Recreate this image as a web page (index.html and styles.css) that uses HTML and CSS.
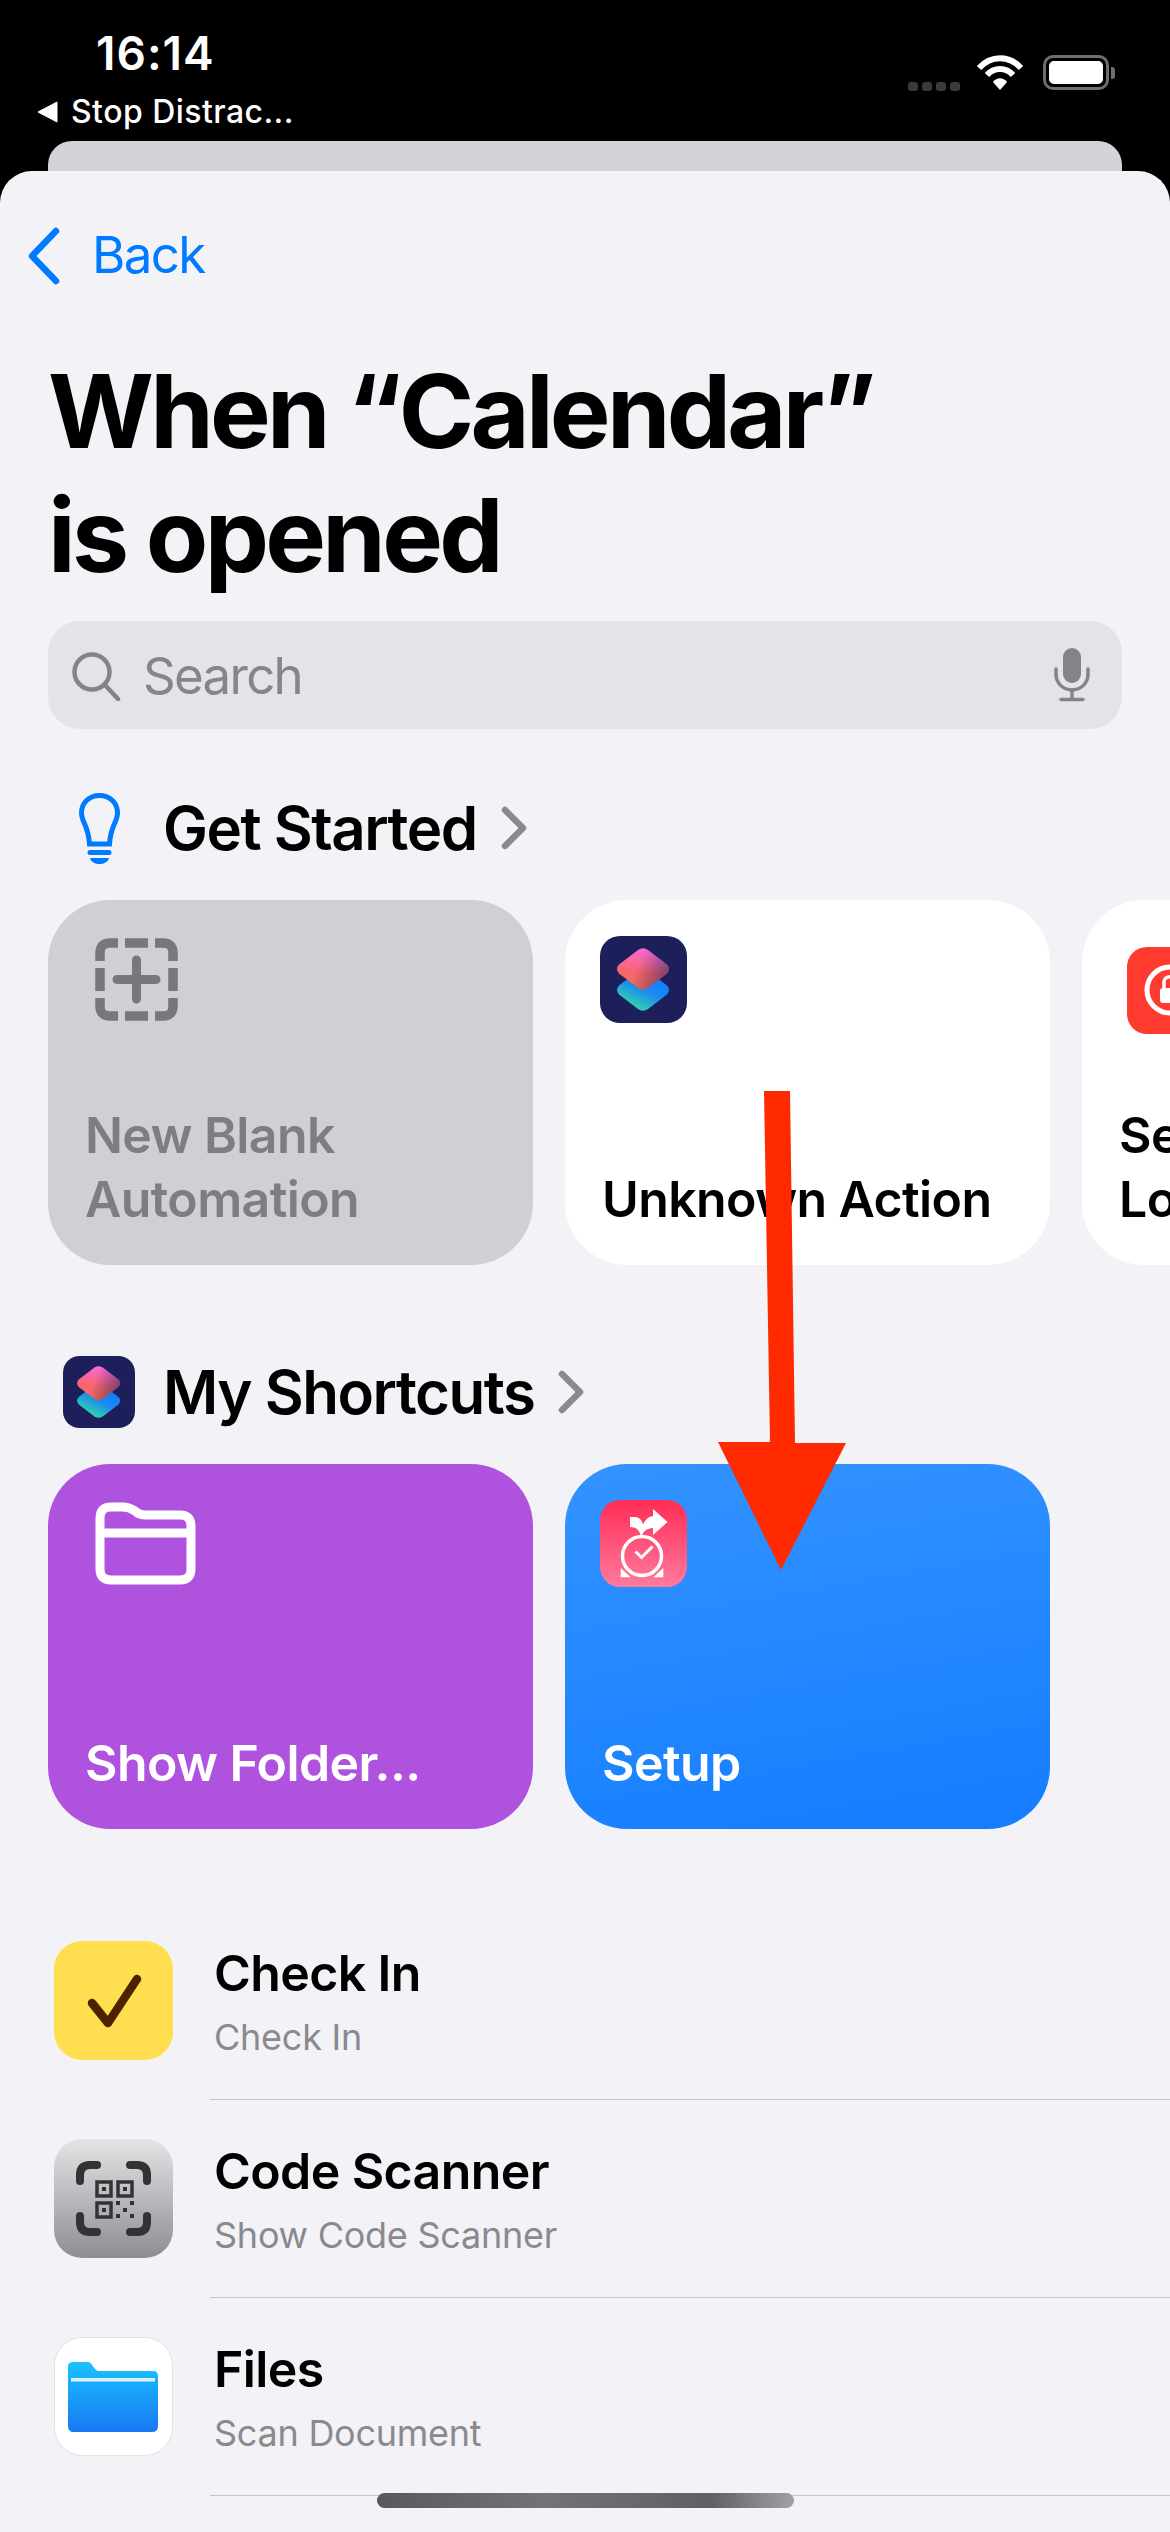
FILE: index.html
```html
<!DOCTYPE html>
<html lang="en">
<head>
    <meta charset="UTF-8">
    <meta name="viewport" content="width=device-width, initial-scale=1.0">
    <title>When Calendar is opened</title>
    <link rel="stylesheet" href="styles.css">
</head>
<body>
    <div class="phone">
        <div class="status-bar">
            <div class="status-left">
                <div class="time">16:14</div>
                <div class="return-app">
                    <svg class="return-arrow" viewBox="0 0 21 22"><path d="M20 1 V21 L1 11 Z" fill="#fff" stroke="#fff" stroke-linejoin="round"/></svg>
                    <span>Stop Distrac...</span>
                </div>
            </div>
            <div class="status-right">
                <div class="signal"><i></i><i></i><i></i><i></i></div>
                <svg class="wifi" viewBox="0 0 48 36" fill="none" stroke="#fff" stroke-width="6">
                    <path d="M3 13 C15 0 33 0 45 13"/>
                    <path d="M11 20 C18 12 30 12 37 20"/>
                    <path d="M17 27 L24 35 L31 27 C27 22 21 22 17 27 Z" fill="#fff" stroke="none"/>
                </svg>
                <div class="battery"><div class="battery-fill"></div></div>
                <div class="battery-nub"></div>
            </div>
        </div>
        <div class="peek-sheet"></div>

        <div class="sheet">
            <div class="nav">
                <svg class="back-chevron" viewBox="0 0 34 58" fill="none" stroke="#007aff" stroke-width="6.5" stroke-linecap="round" stroke-linejoin="round"><path d="M29 4 L5 29 L29 54"/></svg>
                <span class="back-label">Back</span>
            </div>

            <h1 class="title">When “Calendar”<br>is opened</h1>

            <div class="search">
                <svg class="search-icon" viewBox="0 0 49 49" fill="none" stroke="#838388" stroke-width="4.5" stroke-linecap="round"><circle cx="20" cy="20" r="17.5"/><path d="M33 33 L46 47"/></svg>
                <span class="search-text">Search</span>
                <svg class="mic-icon" viewBox="0 0 36 54" fill="none" stroke="#838388" stroke-width="3.5" stroke-linecap="round">
                    <rect x="9" y="0" width="18" height="35" rx="9" fill="#838388" stroke="none"/>
                    <path d="M2 21 V26 C2 35 9 42 18 42 C27 42 34 35 34 26 V21"/>
                    <path d="M18 42 V51 M7 51.5 H29"/>
                </svg>
            </div>

            <div class="section-head">
                <div class="section-icon">
                    <svg class="bulb" viewBox="0 0 41 71" fill="none" stroke="#007aff" stroke-width="5" stroke-linecap="round">
                        <path d="M20.5 2.5 C10 2.5 2.5 10 2.5 20 C2.5 29 9.5 33 10.5 51 H30.5 C31.5 33 38.5 29 38.5 20 C38.5 10 31 2.5 20.5 2.5 Z"/>
                        <path d="M11 59.5 H30"/>
                        <path d="M11 65 H30 C28 73 13 73 11 65 Z" fill="#007aff" stroke="none"/>
                    </svg>
                </div>
                <h2 class="section-title">Get Started</h2>
                <svg class="section-chevron" viewBox="0 0 26 44" fill="none" stroke="#8a8a8e" stroke-width="6.5" stroke-linecap="round" stroke-linejoin="round"><path d="M4 4 L22 22 L4 40"/></svg>
            </div>

            <div class="cards">
                <div class="card card-blank">
                    <svg class="plus-icon" viewBox="0 0 83 83" fill="none" stroke="#77777c" stroke-width="9.5">
                        <path d="M5 23 V15 Q5 5 15 5 H23 M30 5 H53 M60 5 H68 Q78 5 78 15 V23 M78 30 V53 M78 60 V68 Q78 78 68 78 H60 M53 78 H30 M23 78 H15 Q5 78 5 68 V60 M5 53 V30"/>
                        <path d="M22 41.5 H61 M41.5 22 V61" stroke-linecap="round" stroke-width="9"/>
                    </svg>
                    <div class="card-title">New Blank<br>Automation</div>
                </div>
                <div class="card card-white">
                    <svg class="app-icon" viewBox="0 0 87 87">
                        <defs>
                            <linearGradient id="sc-bottom" x1="0.35" y1="1" x2="0.8" y2="0.3"><stop offset="0" stop-color="#35dca3"/><stop offset="0.6" stop-color="#1a8cf0"/><stop offset="1" stop-color="#0f7fff"/></linearGradient>
                            <linearGradient id="sc-top" x1="0.5" y1="0" x2="0.35" y2="0.9"><stop offset="0" stop-color="#fb68dc"/><stop offset="0.65" stop-color="#f8666a"/><stop offset="1" stop-color="#f86c5c"/></linearGradient>
                            <linearGradient id="sc-fade" x1="0.4" y1="0.4" x2="1" y2="0.6"><stop offset="0" stop-color="#1d1f5a" stop-opacity="0"/><stop offset="1" stop-color="#1d1f5a" stop-opacity="0.55"/></linearGradient>
                            <g id="sc-glyph">
                                <rect width="87" height="87" rx="20" fill="#1d1f5a"/>
                                <path d="M38 35 Q43 31.5 48 35 L67 49.5 Q71 54 67 58.5 L48 73 Q43 76.5 38 73 L19 58.5 Q15 54 19 49.5 Z" fill="url(#sc-bottom)"/>
                                <path d="M38 14 Q43 10.5 48 14 L67 28.5 Q71 33 67 37.5 L48 52 Q43 55.5 38 52 L19 37.5 Q15 33 19 28.5 Z" fill="url(#sc-top)"/>
                                <path d="M38 14 Q43 10.5 48 14 L67 28.5 Q71 33 67 37.5 L48 52 Q43 55.5 38 52 L19 37.5 Q15 33 19 28.5 Z" fill="url(#sc-fade)"/>
                            </g>
                        </defs>
                        <use href="#sc-glyph"/>
                    </svg>
                    <div class="card-title">Unknown Action</div>
                </div>
                <div class="card card-white card-lock">
                    <svg class="app-icon" viewBox="0 0 87 87">
                        <rect width="87" height="87" rx="20" fill="#ff3b30"/>
                        <circle cx="43" cy="43" r="23" fill="none" stroke="#fff" stroke-width="5"/>
                        <rect x="33" y="41" width="20" height="15" rx="3" fill="#fff"/>
                        <path d="M37 41 V35 C37 28 49 28 49 35 V41" fill="none" stroke="#fff" stroke-width="3.5"/>
                    </svg>
                    <div class="card-title">Se<br>Lo</div>
                </div>
            </div>

            <div class="section-head">
                <div class="section-icon">
                    <svg class="section-app" viewBox="0 0 87 87"><use href="#sc-glyph"/></svg>
                </div>
                <h2 class="section-title">My Shortcuts</h2>
                <svg class="section-chevron" viewBox="0 0 26 44" fill="none" stroke="#8a8a8e" stroke-width="6.5" stroke-linecap="round" stroke-linejoin="round"><path d="M4 4 L22 22 L4 40"/></svg>
            </div>

            <div class="cards">
                <div class="card card-purple">
                    <svg class="folder-icon" viewBox="0 0 101 83" fill="none" stroke="#fff" stroke-width="9">
                        <path d="M5 16 Q5 5 16 5 H28 C34 5 37 7 40 9 C43 12 46 13 51 13 H85 Q96 13 96 24 V67 Q96 78 85 78 H16 Q5 78 5 67 Z"/>
                        <path d="M5 31 H96"/>
                    </svg>
                    <div class="card-title">Show Folder...</div>
                </div>
                <div class="card card-blue">
                    <svg class="app-icon" viewBox="0 0 87 87">
                        <defs>
                            <linearGradient id="setup-bg" x1="0" y1="0" x2="0" y2="1"><stop offset="0" stop-color="#ff2d55"/><stop offset="1" stop-color="#ff7a9f"/></linearGradient>
                        </defs>
                        <rect width="87" height="87" rx="20" fill="url(#setup-bg)"/>
                        <path d="M53 9 L67.5 22 L53 35 V28 C47 28 43 32 41 36 C41 26 45 17 53 16 Z" fill="#fff"/>
                        <path d="M30 17 H35 C41 17 44 24 44 30 C43 33 42 35 41 37 C40 31 37 27 30 27 Z" fill="#fff"/>
                        <circle cx="42" cy="56" r="19.5" fill="none" stroke="#fff" stroke-width="3.5"/>
                        <path d="M35.5 51.5 L41.5 57.5 L52.5 46.5" fill="none" stroke="#fff" stroke-width="3"/>
                        <path d="M20.7 68 V77.3 H30.7 Z M63.3 68 V77.3 H53.3 Z" fill="#fff"/>
                    </svg>
                    <div class="card-title">Setup</div>
                </div>
            </div>

            <div class="action-list">
                <div class="action-row">
                    <svg class="row-icon" viewBox="0 0 119 119">
                        <rect width="119" height="119" rx="28" fill="#ffdf4f"/>
                        <path d="M38 62 L54 82 L83 38" fill="none" stroke="#4d2200" stroke-width="8.5" stroke-linecap="round" stroke-linejoin="round"/>
                    </svg>
                    <div class="row-text">
                        <div class="row-title">Check In</div>
                        <div class="row-sub">Check In</div>
                    </div>
                </div>
                <div class="action-row">
                    <svg class="row-icon" viewBox="0 0 119 119">
                        <defs>
                            <linearGradient id="scan-bg" x1="0" y1="0" x2="0" y2="1"><stop offset="0" stop-color="#e4e4e7"/><stop offset="1" stop-color="#8e8e92"/></linearGradient>
                        </defs>
                        <rect width="119" height="119" rx="28" fill="url(#scan-bg)"/>
                        <path d="M26 42 V36 Q26 26 36 26 H43 M76 26 H83 Q93 26 93 36 V42 M93 77 V83 Q93 93 83 93 H76 M43 93 H36 Q26 93 26 83 V77" fill="none" stroke="#333336" stroke-width="8" stroke-linecap="round"/>
                        <path d="M43 43 H57 V57 H43 Z M64 43 H78 V57 H64 Z M43 64 H57 V78 H43 Z" fill="none" stroke="#333336" stroke-width="3.5"/>
                        <path d="M48 48 H52 V52 H48 Z M69 48 H73 V52 H69 Z M48 69 H52 V73 H48 Z M62 62 H66 V66 H62 Z M76 62 H80 V66 H76 Z M69 69 H73 V73 H69 Z M62 75 H66 V79 H62 Z M76 75 H80 V79 H76 Z" fill="#333336"/>
                    </svg>
                    <div class="row-text">
                        <div class="row-title">Code Scanner</div>
                        <div class="row-sub">Show Code Scanner</div>
                    </div>
                </div>
                <div class="action-row">
                    <svg class="row-icon" viewBox="0 0 119 119">
                        <defs>
                            <linearGradient id="files-bg" x1="0" y1="0" x2="0" y2="1"><stop offset="0" stop-color="#19c3ff"/><stop offset="1" stop-color="#1a78f2"/></linearGradient>
                        </defs>
                        <rect x="0.5" y="0.5" width="118" height="118" rx="28" fill="#fff" stroke="#e2e2e6"/>
                        <path d="M14 30 Q14 25 19 25 H34 C38 25 40 33 44 34 H99 Q104 34 104 39 V89 Q104 95 98 95 H20 Q14 95 14 89 Z" fill="url(#files-bg)"/>
                        <rect x="17" y="41" width="84" height="3.5" fill="#dff4ff"/>
                    </svg>
                    <div class="row-text">
                        <div class="row-title">Files</div>
                        <div class="row-sub">Scan Document</div>
                    </div>
                </div>
            </div>
        </div>

        <svg class="red-arrow" viewBox="0 0 1170 2532"><path d="M764 1091 H790 L795 1443 H846 L781 1570 L718 1442 H770 Z" fill="#ff2a00"/></svg>
        <div class="home-bar"></div>
    </div>
</body>
</html>
```

FILE: styles.css
```css
body {
    margin: 0;
    background: #000;
    font-family: 'Inter', 'Liberation Sans', sans-serif;
    color: #000;
}
.phone {
    position: relative;
    width: 1170px;
    height: 2532px;
    overflow: hidden;
    background: #000;
    display: flex;
    flex-direction: column;
}

/* status bar */
.status-bar {
    height: 141px;
    flex: none;
    display: flex;
    justify-content: space-between;
    color: #fff;
}
.status-left {
    padding: 26px 0 0 37px;
}
.time {
    margin-left: 59px;
    font-size: 46px;
    line-height: 54px;
    font-weight: 600;
    letter-spacing: 1px;
}
.return-app {
    display: flex;
    align-items: center;
    gap: 13px;
    margin-top: 12px;
    font-size: 32px;
    line-height: 40px;
    font-weight: 500;
    letter-spacing: 0.45px;
}
.return-arrow {
    width: 21px;
    height: 22px;
}
.status-right {
    display: flex;
    align-items: flex-start;
    padding: 55px 55px 0 0;
}
.signal {
    display: flex;
    gap: 4px;
    margin: 27px 16px 0 0;
}
.signal i {
    width: 10px;
    height: 9px;
    border-radius: 3px;
    background: #3a3a3c;
}
.wifi {
    width: 48px;
    height: 36px;
    margin-right: 19px;
}
.battery {
    width: 66px;
    height: 35px;
    box-sizing: border-box;
    border: 3px solid #6e6e70;
    border-radius: 10px;
    padding: 3px;
}
.battery-fill {
    height: 100%;
    background: #fff;
    border-radius: 5px;
}
.battery-nub {
    width: 4px;
    height: 12px;
    margin: 12px 0 0 2px;
    background: #6e6e70;
    border-radius: 0 3px 3px 0;
}
.peek-sheet {
    flex: none;
    height: 30px;
    margin: 0 48px;
    background: #d4d3d8;
    border-radius: 24px 24px 0 0;
}

/* main sheet */
.sheet {
    flex: 1;
    background: #f2f2f7;
    border-radius: 32px 32px 0 0;
    overflow: hidden;
}
.nav {
    display: flex;
    align-items: center;
    height: 84px;
    margin-top: 43px;
    padding-left: 27px;
    color: #007aff;
}
.back-chevron {
    width: 34px;
    height: 58px;
    margin-right: 31px;
}
.back-label {
    font-size: 51px;
    letter-spacing: -1.6px;
    margin-top: -3px;
}
.title {
    margin: 51px 0 0 48px;
    font-size: 102px;
    line-height: 124px;
    font-weight: 700;
    letter-spacing: -3.7px;
}
.search {
    display: flex;
    align-items: center;
    height: 108px;
    margin: 24px 48px 0;
    padding: 0 32px 0 24px;
    background: #e3e3e8;
    border-radius: 32px;
}
.search-icon {
    width: 49px;
    height: 49px;
    margin: 2px 22px 0 0;
}
.search-text {
    flex: 1;
    font-size: 51px;
    letter-spacing: -1.7px;
    color: #85858a;
}
.mic-icon {
    width: 36px;
    height: 54px;
}
.section-head {
    display: flex;
    align-items: center;
    height: 72px;
    margin: 63px 0 36px 48px;
}
.section-head + .cards + .section-head {
    margin-top: 91px;
}
.section-icon {
    width: 102px;
    display: flex;
    justify-content: center;
    margin-right: 13px;
}
.bulb {
    width: 41px;
    height: 71px;
}
.section-app {
    width: 72px;
    height: 72px;
}
.section-title {
    margin: 0 24px 0 0;
    font-size: 60px;
    line-height: 72px;
    font-weight: 600;
    letter-spacing: -1.5px;
}
.section-chevron {
    width: 26px;
    height: 44px;
}

/* cards */
.cards {
    display: flex;
    gap: 32px;
    padding-left: 48px;
}
.card {
    flex: none;
    box-sizing: border-box;
    width: 485px;
    height: 365px;
    padding: 36px 37px 34px;
    border-radius: 62px;
    display: flex;
    flex-direction: column;
    justify-content: space-between;
}
.card-title {
    font-size: 50px;
    line-height: 64px;
    font-weight: 600;
    letter-spacing: -0.6px;
    white-space: nowrap;
}
.card-blank {
    background: #d0cfd4;
    color: #7d7d82;
}
.card-white {
    background: #fff;
}
.card-purple {
    background: #af52de;
    color: #fff;
}
.card-blue {
    background: linear-gradient(170deg, #3393ff, #147dff);
    color: #fff;
}
.app-icon {
    width: 87px;
    height: 87px;
    margin-left: -2px;
}
.card-lock .app-icon {
    margin: 11px 0 0 8px;
}
.plus-icon {
    width: 83px;
    height: 83px;
    margin: 2px 0 0 10px;
}
.folder-icon {
    width: 101px;
    height: 83px;
    margin: 2px 0 0 10px;
}

/* list of actions */
.action-list {
    margin: 73px 0 0;
}
.action-row {
    display: flex;
    align-items: flex-start;
    padding: 39px 0;
    margin-left: 54px;
    position: relative;
    gap: 41px;
}
.action-row::after {
    content: "";
    position: absolute;
    left: 156px;
    right: 0;
    bottom: -1px;
    height: 1.5px;
    background: #c6c6c8;
}
.action-row + .action-row {
    margin-top: 1px;
}
.row-icon {
    width: 119px;
    height: 119px;
    flex: none;
}
.row-text {
    height: 119px;
}
.row-title {
    font-size: 50px;
    line-height: 64px;
    font-weight: 600;
    letter-spacing: -0.6px;
}
.row-sub {
    margin-top: 7px;
    font-size: 36px;
    line-height: 51px;
    letter-spacing: -0.25px;
    color: #8a8a8e;
}

/* overlays */
.red-arrow {
    position: absolute;
    left: 0;
    top: 0;
    width: 1170px;
    height: 2532px;
}
.home-bar {
    position: absolute;
    left: 377px;
    top: 2493px;
    width: 417px;
    height: 15px;
    border-radius: 8px;
    background: linear-gradient(90deg, #59595c 0%, #737377 40%, #606063 80%, #a2a2a6 100%);
}
```
